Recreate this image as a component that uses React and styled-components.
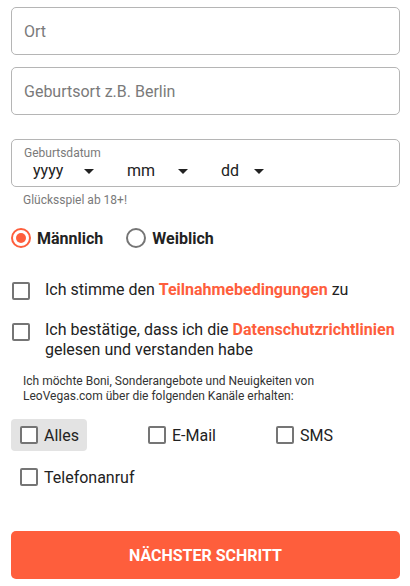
import React from "react";
import styled, { createGlobalStyle } from "styled-components";

const Global = createGlobalStyle`
  html, body { margin: 0; padding: 0; background: #fff; }
  body { font-family: Roboto, "Liberation Sans", Arial, sans-serif; color: #222; }
  * { box-sizing: border-box; }
`;

const ORANGE = "#fe5e3c";

const Page = styled.div`
  width: 410px;
  padding: 7px 10px 0 10px;
  display: flex;
  flex-direction: column;
`;

const TextField = styled.div`
  height: 48px;
  margin-left: 1px;
  border: 1px solid #b5b5b5;
  border-radius: 5px;
  display: flex;
  align-items: center;
  padding-left: 12px;
  font-size: 16px;
  color: #7a7a7a;
  margin-bottom: ${(p) => p.$mb || 0}px;
`;

const DateBox = styled.div`
  height: 48px;
  margin-left: 1px;
  border: 1px solid #b5b5b5;
  border-radius: 5px;
  padding: 6px 0 0 12px;
  display: flex;
  flex-direction: column;
`;

const DateLabel = styled.div`
  font-size: 12px;
  line-height: 14px;
  color: #7a7a7a;
`;

const DateRow = styled.div`
  display: flex;
  padding-left: 9px;
  margin-top: 1px;
`;

const DateSelect = styled.div`
  width: 94px;
  display: flex;
  align-items: center;
  font-size: 16px;
  line-height: 20px;
  color: #222;
`;

const DateText = styled.span`
  width: ${(p) => p.$w}px;
`;

const Caret = styled.span`
  width: 0;
  height: 0;
  border-left: 5px solid transparent;
  border-right: 5px solid transparent;
  border-top: 5px solid #222;
  margin-top: 1px;
`;

const Helper = styled.div`
  font-size: 12px;
  line-height: 14px;
  color: #7a7a7a;
  padding-left: 13px;
  margin-top: 6px;
`;

const RadioRow = styled.div`
  display: flex;
  align-items: center;
  margin-top: 21px;
  margin-left: 1px;
  height: 20px;
`;

const RadioItem = styled.label`
  display: flex;
  align-items: center;
  gap: 6px;
  font-size: 16px;
  font-weight: 700;
  color: #222;
  margin-right: 23px;
`;

const RadioCircle = styled.span`
  width: 20px;
  height: 20px;
  border-radius: 50%;
  border: 2px solid ${(p) => (p.$on ? ORANGE : "#757575")};
  display: flex;
  align-items: center;
  justify-content: center;
  &::after {
    content: "";
    width: 10px;
    height: 10px;
    border-radius: 50%;
    background: ${(p) => (p.$on ? ORANGE : "transparent")};
  }
`;

const ConsentRow = styled.div`
  display: flex;
  align-items: flex-start;
  gap: 15px;
  margin-left: 2px;
  margin-top: ${(p) => p.$mt}px;
  font-size: 16px;
  line-height: 20px;
  color: #222;
`;

const Box = styled.span`
  flex: none;
  width: ${(p) => p.$size || 18}px;
  height: ${(p) => p.$size || 18}px;
  border: 2px solid #757575;
  border-radius: 2px;
  background: #fff;
  margin-top: ${(p) => p.$mt || 0}px;
`;

const Link = styled.span`
  color: ${ORANGE};
  font-weight: 700;
`;

const Note = styled.p`
  margin: 14px 0 0 0;
  padding-left: 13px;
  font-size: 12px;
  line-height: 15px;
  color: #333;
`;

const ChannelGrid = styled.div`
  display: grid;
  grid-template-columns: repeat(3, 128px);
  row-gap: 10px;
  margin-top: 15px;
  margin-left: 1px;
`;

const Chip = styled.label`
  justify-self: start;
  height: 32px;
  display: flex;
  align-items: center;
  gap: 6px;
  padding: 0 8px 0 9px;
  border-radius: 4px;
  background: ${(p) => (p.$active ? "#e3e3e3" : "transparent")};
  font-size: 16px;
  color: #222;
`;

const Button = styled.button`
  margin-top: 38px;
  margin-left: 1px;
  height: 48px;
  border: none;
  border-radius: 5px;
  background: ${ORANGE};
  color: #fff;
  font-family: Roboto, "Liberation Sans", Arial, sans-serif;
  font-size: 16px;
  font-weight: 700;
  text-transform: uppercase;
  letter-spacing: 0;
`;

export default function App() {
  return (
    <>
      <Global />
      <Page>
        <TextField $mb={12}>Ort</TextField>
        <TextField $mb={24}>Geburtsort z.B. Berlin</TextField>
        <DateBox>
          <DateLabel>Geburtsdatum</DateLabel>
          <DateRow>
            <DateSelect>
              <DateText $w={51}>yyyy</DateText>
              <Caret />
            </DateSelect>
            <DateSelect>
              <DateText $w={51}>mm</DateText>
              <Caret />
            </DateSelect>
            <DateSelect>
              <DateText $w={33}>dd</DateText>
              <Caret />
            </DateSelect>
          </DateRow>
        </DateBox>
        <Helper>Glücksspiel ab 18+!</Helper>
        <RadioRow>
          <RadioItem>
            <RadioCircle $on />
            Männlich
          </RadioItem>
          <RadioItem>
            <RadioCircle />
            Weiblich
          </RadioItem>
        </RadioRow>
        <ConsentRow $mt={32}>
          <Box $mt={2} />
          <span>
            Ich stimme den <Link>Teilnahmebedingungen</Link> zu
          </span>
        </ConsentRow>
        <ConsentRow $mt={20}>
          <Box $mt={3} />
          <span>
            Ich bestätige, dass ich die <Link>Datenschutzrichtlinien</Link>
            <br />
            gelesen und verstanden habe
          </span>
        </ConsentRow>
        <Note>
          Ich möchte Boni, Sonderangebote und Neuigkeiten von
          <br />
          LeoVegas.com über die folgenden Kanäle erhalten:
        </Note>
        <ChannelGrid>
          <Chip $active>
            <Box $size={18} />
            Alles
          </Chip>
          <Chip>
            <Box $size={18} />
            E-Mail
          </Chip>
          <Chip>
            <Box $size={18} />
            SMS
          </Chip>
          <Chip>
            <Box $size={18} />
            Telefonanruf
          </Chip>
        </ChannelGrid>
        <Button>Nächster Schritt</Button>
      </Page>
    </>
  );
}
